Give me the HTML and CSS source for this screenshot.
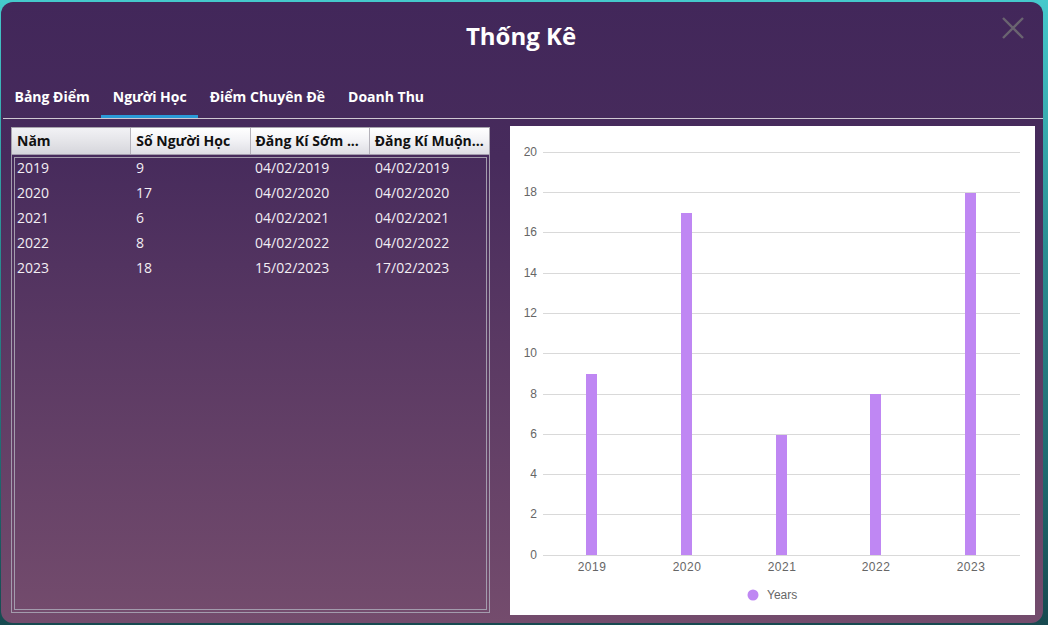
FILE: index.html
```html
<!DOCTYPE html>
<html lang="vi">
<head>
<meta charset="utf-8">
<title>Thống Kê</title>
<link rel="stylesheet" href="styles.css">
</head>
<body>
<div class="window">
  <div class="titlebar"><h1 class="title">Thống Kê</h1></div>
  <svg class="close" width="22" height="22" viewBox="0 0 22 22"><path d="M1 1 L21 21 M21 1 L1 21" stroke="#6a6470" stroke-width="2.4" fill="none"/></svg>
  <div class="tabs">
    <div class="tab">Bảng Điểm</div>
    <div class="tab active">Người Học</div>
    <div class="tab">Điểm Chuyên Đề</div>
    <div class="tab">Doanh Thu</div>
  </div>
  <div class="content">
    <div class="grid">
      <div class="head">
        <div class="hcell first">Năm</div>
        <div class="hcell">Số Người Học</div>
        <div class="hcell">Đăng Kí Sớm ...</div>
        <div class="hcell">Đăng Kí Muộn...</div>
      </div>
      <div class="body">
        <div class="inner">
          <div class="rows">
            <div class="row"><span>2019</span><span>9</span><span>04/02/2019</span><span>04/02/2019</span></div>
            <div class="row"><span>2020</span><span>17</span><span>04/02/2020</span><span>04/02/2020</span></div>
            <div class="row"><span>2021</span><span>6</span><span>04/02/2021</span><span>04/02/2021</span></div>
            <div class="row"><span>2022</span><span>8</span><span>04/02/2022</span><span>04/02/2022</span></div>
            <div class="row"><span>2023</span><span>18</span><span>15/02/2023</span><span>17/02/2023</span></div>
          </div>
        </div>
      </div>
    </div>
    <div class="chart">
      <svg width="525" height="489" viewBox="0 0 525 489" class="chart-svg">
        <g stroke="#d9d9d9" stroke-width="1">
          <line x1="33" y1="26.5" x2="510" y2="26.5"/>
          <line x1="33" y1="66.5" x2="510" y2="66.5"/>
          <line x1="33" y1="106.5" x2="510" y2="106.5"/>
          <line x1="33" y1="147.5" x2="510" y2="147.5"/>
          <line x1="33" y1="187.5" x2="510" y2="187.5"/>
          <line x1="33" y1="227.5" x2="510" y2="227.5"/>
          <line x1="33" y1="268.5" x2="510" y2="268.5"/>
          <line x1="33" y1="308.5" x2="510" y2="308.5"/>
          <line x1="33" y1="348.5" x2="510" y2="348.5"/>
          <line x1="33" y1="388.5" x2="510" y2="388.5"/>
          <line x1="33" y1="429.5" x2="510" y2="429.5"/>
        </g>
        <g class="ylab" text-anchor="end">
          <text x="27" y="30">20</text>
          <text x="27" y="70">18</text>
          <text x="27" y="110">16</text>
          <text x="27" y="151">14</text>
          <text x="27" y="191">12</text>
          <text x="27" y="231">10</text>
          <text x="27" y="272">8</text>
          <text x="27" y="312">6</text>
          <text x="27" y="352">4</text>
          <text x="27" y="392">2</text>
          <text x="27" y="433">0</text>
        </g>
        <g fill="#bf87f3">
          <rect x="76" y="248" width="11" height="181"/>
          <rect x="171" y="87" width="11" height="342"/>
          <rect x="266" y="309" width="11" height="120"/>
          <rect x="360" y="268" width="11" height="161"/>
          <rect x="455" y="67" width="11" height="362"/>
        </g>
        <g class="xlab" text-anchor="middle">
          <text x="82" y="445">2019</text>
          <text x="177" y="445">2020</text>
          <text x="272" y="445">2021</text>
          <text x="366" y="445">2022</text>
          <text x="461" y="445">2023</text>
        </g>
        <circle cx="243" cy="469" r="5.5" fill="#bf87f3"/>
        <text class="legend" x="257" y="473">Years</text>
      </svg>
    </div>
  </div>
</div>
</body>
</html>
```

FILE: styles.css
```css
* { box-sizing: border-box; }
html, body { margin: 0; padding: 0; }
body {
  width: 1048px;
  height: 625px;
  overflow: hidden;
  background: linear-gradient(180deg, #45c9cc 0%, #2a8e92 40%, #1f6a70 75%, #174a50 100%);
  font-family: "Open Sans", "Noto Sans", sans-serif;
}
.window {
  position: relative;
  margin: 2px 5px 2px 1px;
  width: 1042px;
  height: 621px;
  border-radius: 12px;
  background: linear-gradient(180deg, #42275a 0%, #472b5c 25%, #5a3963 55%, #744c6d 100%);
  display: flex;
  flex-direction: column;
  overflow: hidden;
}
.titlebar {
  height: 68px;
  flex: none;
  display: flex;
  align-items: center;
  justify-content: center;
}
.title {
  margin: 0 2px 0 0;
  font-size: 24px;
  font-weight: 700;
  color: #ffffff;
  line-height: 1;
}
.close {
  position: absolute;
  top: 15px;
  right: 19px;
}
.tabs {
  flex: none;
  height: 49px;
  margin-left: 2px;
  display: flex;
  align-items: flex-end;
  border-bottom: 1px solid #cfc8d2;
}
.tab {
  padding: 0 11.5px;
  line-height: 36px;
  font-size: 14px;
  font-weight: 700;
  color: #ffffff;
  border-bottom: 3px solid transparent;
}
.tab.active {
  border-bottom-color: #2a9ad8;
}
.content {
  flex: 1;
  display: flex;
  gap: 20px;
  padding: 7px 8px 8px 10px;
}
.grid {
  width: 479px;
  margin-top: 1px;
  height: 486px;
  display: flex;
  flex-direction: column;
}
.head {
  display: grid;
  grid-template-columns: 1fr 1fr 1fr 1fr;
  height: 27px;
  border: 1px solid #a7a4ad;
  border-bottom: none;
}
.hcell {
  background: linear-gradient(180deg, #ffffff 0%, #f3f3f6 45%, #dedee4 100%);
  border-right: 1px solid #b4b2ba;
  color: #111111;
  font-size: 14px;
  font-weight: 700;
  line-height: 25px;
  padding-left: 5px;
  white-space: nowrap;
  overflow: hidden;
}
.hcell.first {
  background: linear-gradient(180deg, #f2f2f5 0%, #e6e6ea 45%, #d6d6dc 100%);
}
.hcell:last-child { border-right: none; }
.body {
  flex: 1;
  border: 1px solid #a39cad;
  padding: 2px;
}
.inner {
  height: 100%;
  border: 1px solid #a39cad;
}
.rows {
  margin-top: -3px;
}
.row {
  display: grid;
  grid-template-columns: 119px 119px 120px 120px;
  height: 25px;
  line-height: 25px;
  font-size: 14px;
  color: #f2eef4;
}
.row span { padding-left: 2px; }
.chart {
  width: 525px;
  height: 489px;
  background: #ffffff;
}
.chart-svg { display: block; }
.ylab text, .xlab text, .legend {
  font-family: "Liberation Sans", Arial, sans-serif;
  font-size: 12px;
  fill: #666666;
}
.xlab text { letter-spacing: 0.5px; }
```
